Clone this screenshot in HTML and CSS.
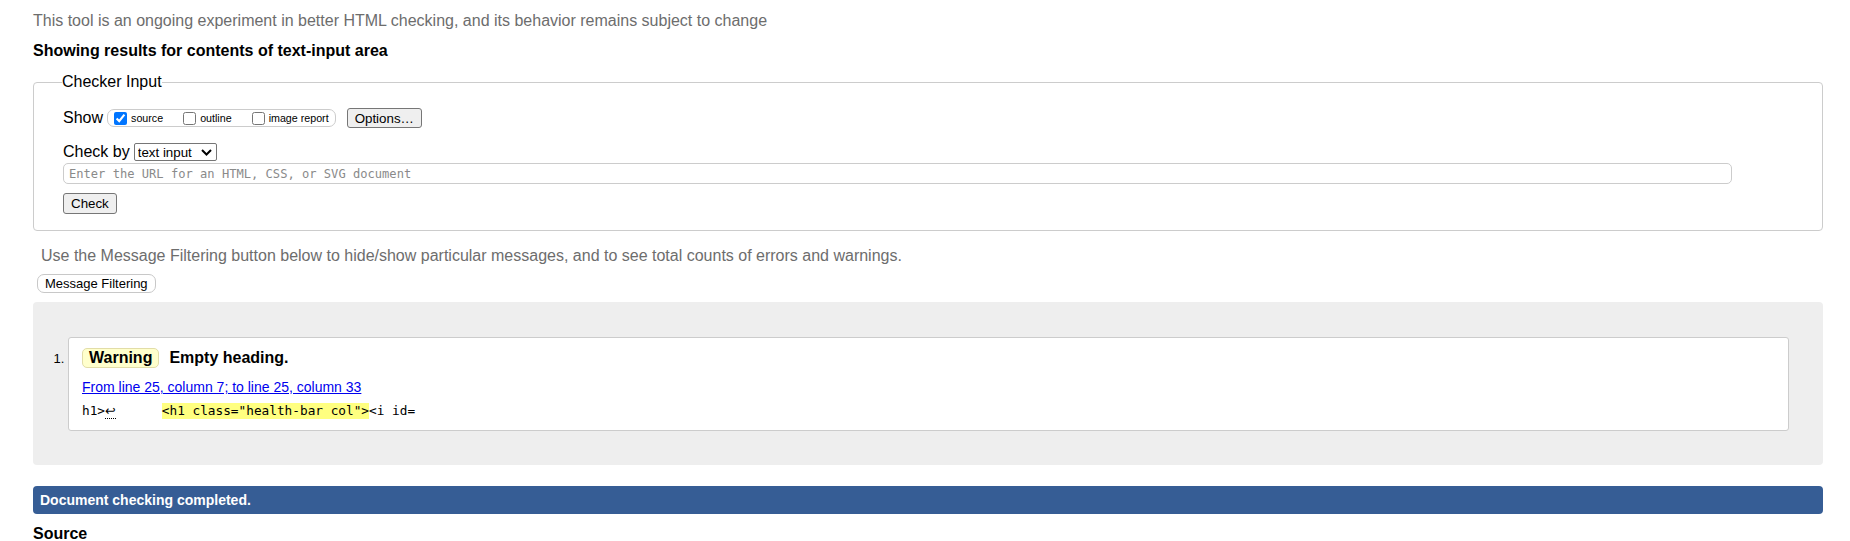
FILE: index.html
```html
<!DOCTYPE html>
<html lang="en">
<head>
<meta charset="utf-8">
<title>Nu Html Checker</title>
<link rel="stylesheet" href="styles.css">
</head>
<body>
<div class="page">
  <p class="experiment">This tool is an ongoing experiment in better HTML checking, and its behavior remains subject to change</p>
  <p class="showing">Showing results for contents of text-input area</p>
  <form class="checker-form">
    <fieldset class="checker">
      <legend class="checker-legend">Checker Input</legend>
      <div class="show-row">
        <span class="show-label">Show</span>
        <span class="opts">
          <label class="opt"><input type="checkbox" class="cb" checked>source</label>
          <label class="opt"><input type="checkbox" class="cb">outline</label>
          <label class="opt opt-last"><input type="checkbox" class="cb">image report</label>
        </span>
        <button type="button" class="btn btn-options">Options…</button>
      </div>
      <div class="by-row">
        <span class="by-label">Check by</span>
        <span class="select">
          <select class="select-native">
            <option>text input</option>
            <option>address</option>
            <option>file upload</option>
          </select>
          <svg class="chev" width="11" height="7" viewBox="0 0 11 7"><path d="M1 1 L5.5 5.5 L10 1" fill="none" stroke="#000" stroke-width="2"/></svg>
        </span>
      </div>
      <input type="text" class="url" placeholder="Enter the URL for an HTML, CSS, or SVG document">
      <button type="button" class="btn btn-check">Check</button>
    </fieldset>
  </form>
  <p class="note">Use the Message Filtering button below to hide/show particular messages, and to see total counts of errors and warnings.</p>
  <button type="button" class="filter-btn">Message Filtering</button>
  <div class="results">
    <ol class="messages">
      <li class="msg">
        <div class="msg-head"><span class="badge">Warning</span><span class="msg-title">Empty heading.</span></div>
        <p class="location"><a href="#l25c7">From line 25, column 7; to line 25, column 33</a></p>
        <p class="extract">h1&gt;<b class="lf" title="Line break">↩</b>      <b class="hl">&lt;h1 class="health-bar col"&gt;</b>&lt;i id=</p>
      </li>
    </ol>
  </div>
  <p class="done">Document checking completed.</p>
  <h2 class="source-title">Source</h2>
</div>
</body>
</html>
```

FILE: styles.css
```css
html, body {
  margin: 0;
  padding: 0;
  background: #fff;
}

body {
  font-family: "Liberation Sans", Arial, sans-serif;
  color: #000;
}

.page {
  padding: 12px 27px 0 33px;
}

.experiment {
  margin: 0;
  font-size: 16px;
  line-height: 18px;
  color: #6d6d6d;
}

.showing {
  margin: 12px 0 0;
  font-size: 16px;
  line-height: 18px;
  font-weight: bold;
}

.checker-form {
  margin: 0;
}

.checker {
  margin: 13px 0 0;
  padding: 0 90px 16px 29px;
  border: 1px solid #cccccc;
  border-radius: 4px;
  min-width: 0;
}

.checker-legend {
  font-size: 16px;
  line-height: 18px;
  padding: 0;
  margin-left: -1px;
}

.show-row {
  display: flex;
  align-items: center;
  height: 20px;
  margin-top: 17px;
  font-size: 16px;
  line-height: 18px;
}

.opts {
  display: inline-flex;
  align-items: center;
  box-sizing: border-box;
  height: 18px;
  margin-left: 4px;
  padding: 0 6px;
  border: 1px solid #cccccc;
  border-radius: 7px;
}

.opt {
  display: inline-flex;
  align-items: center;
  font-size: 10.7px;
  line-height: 13px;
  margin-right: 20px;
}

.opt-last {
  margin-right: 0;
}

.cb {
  width: 13px;
  height: 13px;
  margin: 0 4px 0 0;
}

.btn {
  box-sizing: border-box;
  font-family: "Liberation Sans", Arial, sans-serif;
  font-size: 13.33px;
  color: #000;
  background: #efefef;
  border: 1px solid #767676;
  border-radius: 3px;
  padding: 0 7px;
}

.btn-options {
  height: 20px;
  margin-left: 11px;
}

.by-row {
  display: flex;
  align-items: center;
  height: 18px;
  margin-top: 15px;
  font-size: 16px;
  line-height: 18px;
}

.select {
  display: inline-flex;
  align-items: center;
  box-sizing: border-box;
  width: 83px;
  height: 18px;
  margin-left: 4px;
  border: 1px solid #767676;
  border-radius: 2px;
  background: #fff;
}

.select-native {
  appearance: none;
  -webkit-appearance: none;
  border: 0;
  background: transparent;
  width: 66px;
  height: 16px;
  padding: 0 0 0 3px;
  margin: 0;
  font-family: "Liberation Sans", Arial, sans-serif;
  font-size: 13.33px;
  color: #000;
  outline: none;
}

.chev {
  display: block;
  flex: none;
}

.url {
  display: block;
  box-sizing: border-box;
  width: 100%;
  height: 21px;
  margin: 2px 0 0;
  padding: 0 5px;
  border: 1px solid #cccccc;
  border-radius: 5px;
  font-family: "DejaVu Sans Mono", "Liberation Mono", monospace;
  font-size: 12.1px;
  color: #000;
  background: #fff;
}

.url::placeholder {
  color: #8a8a8a;
}

.btn-check {
  display: block;
  height: 21px;
  margin-top: 9px;
}

.note {
  margin: 16px 0 0 8px;
  font-size: 16px;
  line-height: 18px;
  color: #6d6d6d;
}

.filter-btn {
  display: block;
  box-sizing: border-box;
  height: 19px;
  margin: 9px 0 0 4px;
  padding: 0 7px;
  font-family: "Liberation Sans", Arial, sans-serif;
  font-size: 13px;
  line-height: 15px;
  color: #000;
  background: #fff;
  border: 1px solid #c8c8c8;
  border-radius: 7px;
}

.results {
  margin-top: 9px;
  padding: 35px 34px 34px 35px;
  background: #eeeeee;
  border-radius: 4px;
}

.messages {
  margin: 0;
  padding: 0;
  list-style: decimal outside;
}

.msg {
  font-size: 13px;
  background: #fff;
  border: 1px solid #cccccc;
  border-radius: 3px;
  padding: 10px 13px 11px;
}

.msg-head {
  font-size: 16px;
  line-height: 18px;
  font-weight: bold;
}

.badge {
  display: inline-block;
  padding: 0 6px;
  line-height: 18px;
  background: #ffffcc;
  border: 1px solid #e2dda8;
  border-radius: 5px;
}

.msg-title {
  margin-left: 10px;
}

.location {
  margin: 11px 0 0;
  font-size: 14px;
  line-height: 16px;
}

.location a {
  color: #0000ee;
  text-decoration: underline;
}

.extract {
  margin: 8px 0 0;
  font-family: "DejaVu Sans Mono", "Liberation Mono", monospace;
  font-size: 12.75px;
  line-height: 16px;
  white-space: pre;
}

.lf {
  font-family: "DejaVu Sans", sans-serif;
  font-weight: normal;
  border-bottom: 1px dotted #000;
}

.hl {
  display: inline-block;
  font-weight: normal;
  line-height: 16px;
  background: #ffff80;
}

.done {
  margin: 21px 0 0;
  height: 28px;
  padding-left: 7px;
  font-size: 14px;
  line-height: 28px;
  font-weight: bold;
  color: #fff;
  background: #365d95;
  border-radius: 4px;
}

.source-title {
  margin: 11px 0 0;
  font-size: 16px;
  line-height: 18px;
  font-weight: bold;
}
```
